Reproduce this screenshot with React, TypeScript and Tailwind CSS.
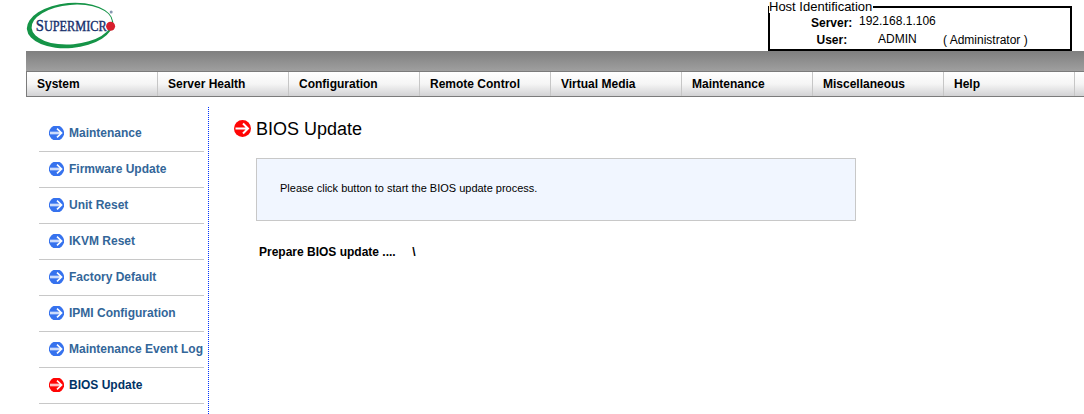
import React from "react";

const menu = ["System", "Server Health", "Configuration", "Remote Control", "Virtual Media", "Maintenance", "Miscellaneous", "Help"];
const links = ["Maintenance", "Firmware Update", "Unit Reset", "IKVM Reset", "Factory Default", "IPMI Configuration", "Maintenance Event Log", "BIOS Update"];

function SideArrow({ color }: { color: string }) {
  return (
    <svg width="15" height="14" viewBox="0 0 15 14" className="block shrink-0">
      <circle cx="7.5" cy="7" r="7.6" fill={color} />
      <path d="M1 5.5H10M1 8.5H10" fill="none" stroke="#fff" strokeOpacity="0.25" strokeWidth="1" />
      <path d="M1 7H12.6M8 2.6L12.6 7L8 11.4" fill="none" stroke="#fff" strokeWidth="1.6" />
    </svg>
  );
}

function TitleArrow() {
  return (
    <svg width="17" height="17" viewBox="0 0 17 17" className="block shrink-0 -translate-y-px">
      <circle cx="8.5" cy="8.5" r="8.5" fill="#ff0505" />
      <path d="M1.5 8.5H14M9 3.5L14 8.5L9 13.5" fill="none" stroke="#fff" strokeWidth="2" />
    </svg>
  );
}

function Logo() {
  return (
    <svg width="92" height="51" viewBox="0 0 92 51" className="ml-[26px] block">
      <g transform="rotate(-5 44 25)">
        <ellipse cx="44" cy="25.5" rx="43.3" ry="22.5" fill="#159447" />
        <ellipse cx="45.8" cy="24.7" rx="40.3" ry="19.7" fill="#fff" />
      </g>
      <text x="9.7" y="30.7" fill="#16306c" stroke="#16306c" strokeWidth="0.4" fontFamily="Liberation Serif, serif" fontSize="17" textLength="71" lengthAdjust="spacingAndGlyphs">
        S<tspan fontSize="14.2">UPERMICR</tspan>
      </text>
      <circle cx="84.6" cy="26.3" r="4.5" fill="#d71f2e" />
      <circle cx="85.2" cy="12" r="1.5" fill="#8796b0" />
    </svg>
  );
}

export default function App() {
  return (
    <div className="flex h-[414px] w-[1084px] flex-col overflow-hidden bg-white font-['Liberation_Sans',Arial,sans-serif] text-[12px] leading-[14px] text-black">
      <header className="flex h-[51px] shrink-0 justify-between">
        <Logo />
        <fieldset className="mr-3 h-[51px] w-[304px] border-2 border-black">
          <legend className="-ml-px h-[13px] pr-px text-[13px] leading-[13px]">Host Identification</legend>
          <div className="flex h-[18px]">
            <b className="ml-[41px] mt-[3px] w-12">Server:</b>
            <span className="mt-px">192.168.1.106</span>
          </div>
          <div className="flex h-[18px]">
            <b className="ml-[46.5px] mt-[2px] w-[61.5px]">User:</b>
            <span className="mt-px w-[65px]">ADMIN</span>
            <span className="mt-[2px]">( Administrator )</span>
          </div>
        </fieldset>
      </header>
      <div className="ml-[26px] h-5 shrink-0 bg-linear-to-b from-[#7f7f7f] to-[#9f9f9f]" />
      <nav className="ml-[26px] flex h-[26px] shrink-0 border-y border-l border-[#7b7b7b] bg-linear-to-b from-white via-[#f5f5f5] to-[#d2d2d4]">
        {menu.map((m) => (
          <div key={m} className="w-[131px] shrink-0 border-r border-[#c6c6c6] pl-[10px] pt-[5px] font-bold">{m}</div>
        ))}
      </nav>
      <div className="flex min-h-0 flex-1">
        <aside className="ml-[39px] mt-[10px] w-[170px] shrink-0 border-r border-dotted border-r-[#0033ff] pr-1 pt-[9px]">
          {links.map((l) => (
            <div key={l} className={`flex h-9 items-center gap-[5px] whitespace-nowrap border-b border-[#c8c8c8] pb-[2px] pl-[10px] font-bold ${l === "BIOS Update" ? "text-[#003366]" : "text-[#336699]"}`}>
              <SideArrow color={l === "BIOS Update" ? "#ff0505" : "#3672ee"} />
              <span>{l}</span>
            </div>
          ))}
        </aside>
        <main className="ml-[25px] pt-[22px]">
          <h1 className="flex h-5 items-center gap-[5px] text-[18px] leading-5">
            <TitleArrow />
            BIOS Update
          </h1>
          <p className="ml-[22px] mt-[19px] h-[63px] w-[600px] border border-[#c8c8c8] bg-[#f1f6ff] pl-[23px] pt-[22px] text-[11px]">Please click button to start the BIOS update process.</p>
          <div className="ml-[25px] mt-6 flex gap-[16.5px] font-bold">
            <span>Prepare BIOS update ....</span>
            <span>\</span>
          </div>
        </main>
      </div>
    </div>
  );
}
